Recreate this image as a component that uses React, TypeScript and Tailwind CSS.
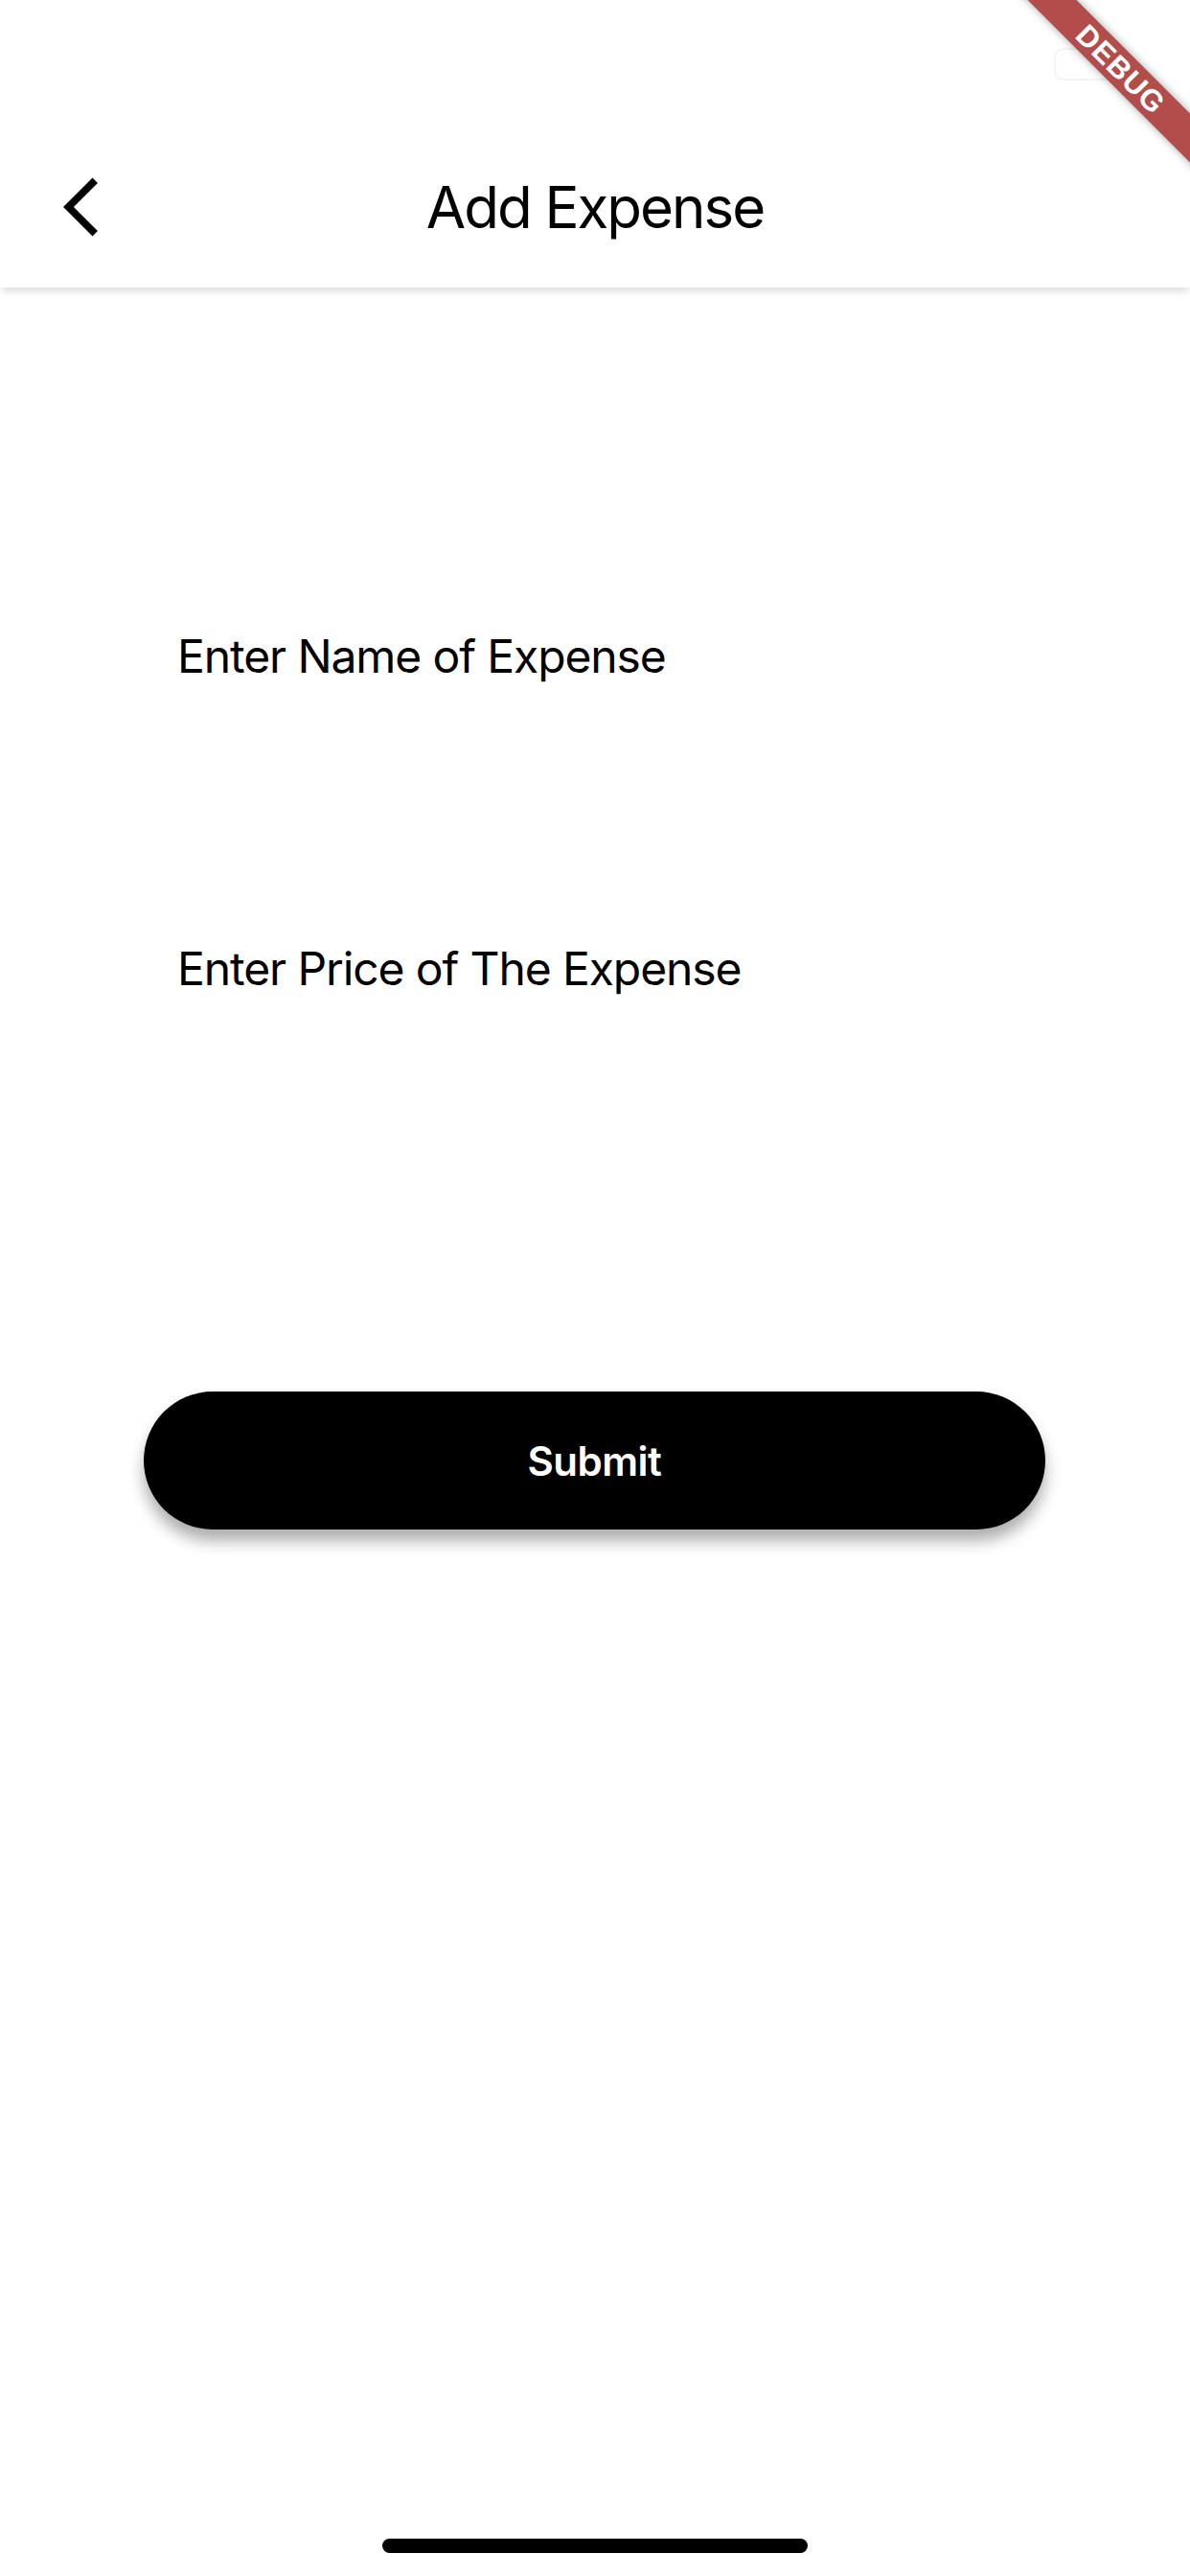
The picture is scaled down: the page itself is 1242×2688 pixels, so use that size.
import React from 'react';

export default function App() {
  return (
    <div className="relative w-[1242px] h-[2688px] bg-white overflow-hidden" style={{ fontFamily: 'Inter, "Liberation Sans", sans-serif' }}>
      {/* status bar, icons are white on white */}
      <div className="relative z-20 h-[132px] bg-white flex justify-end">
        <div className="mt-[50px] mr-[72px] w-[70px] h-[34px] border-2 border-[#f4f4f4] rounded-[10px] p-[4px]">
          <div className="w-[30px] h-full bg-white rounded-[6px] shadow-[0_0_2px_rgba(0,0,0,0.05)]" />
        </div>
      </div>

      {/* app bar */}
      <header className="relative z-10 h-[168px] flex items-center bg-white shadow-[0_6px_8px_-2px_rgba(0,0,0,0.14)]">
        <div className="w-[168px] h-full flex items-center pl-[66px]">
          <svg width="74" height="74" viewBox="0 0 24 24" fill="#000">
            <path d="M11.67 3.87L9.9 2.1 0 12l9.9 9.9 1.77-1.77L3.54 12z" />
          </svg>
        </div>
        <h1 className="flex-1 text-center text-[60px] leading-[72px] font-normal text-black tracking-[-2px]">Add Expense</h1>
        <div className="w-[168px]" />
      </header>

      {/* form */}
      <main className="flex flex-col pt-[356px]">
        <div className="pl-[185px] text-[48px] leading-[58px] text-black tracking-[-1.1px]">Enter Name of Expense</div>
        <div className="mt-[268px] pl-[185px] text-[48px] leading-[58px] text-black tracking-[-1.1px]">Enter Price of The Expense</div>
        <button className="mt-[412px] ml-[150px] w-[941px] h-[144px] rounded-full bg-black text-white text-[42px] font-semibold tracking-[-0.5px] shadow-[0_12px_16px_rgba(0,0,0,0.32)]">
          Submit
        </button>
      </main>

      {/* debug banner */}
      <div className="absolute z-30 left-[970px] top-[54px] w-[400px] h-[36px] rotate-45 bg-[#b24d4b] shadow-[0_0_10px_rgba(0,0,0,0.35)] flex items-center justify-center">
        <span className="text-white text-[31px] leading-none font-black tracking-[1px]" style={{ fontFamily: '"Liberation Sans", sans-serif' }}>DEBUG</span>
      </div>

      {/* home indicator */}
      <div className="absolute left-[399px] top-[2649px] w-[444px] h-[15px] rounded-full bg-black" />
    </div>
  );
}
